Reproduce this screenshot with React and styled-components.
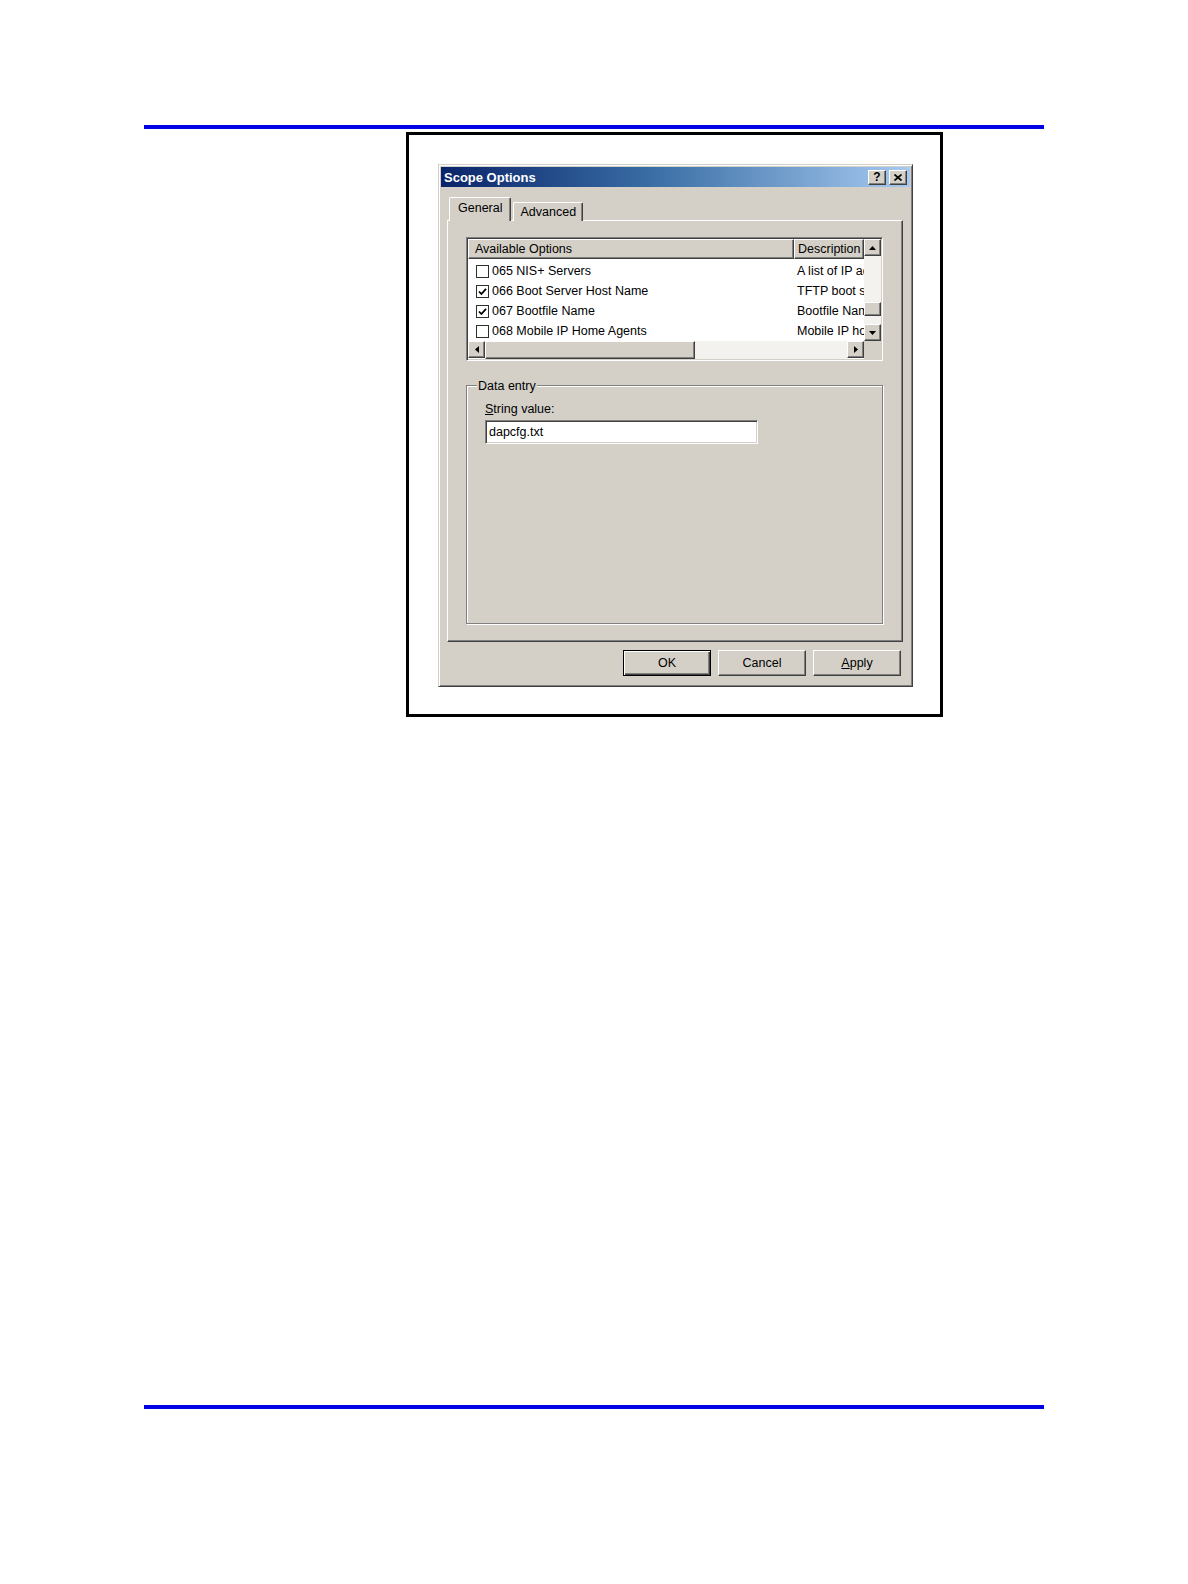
import React from 'react';
import styled, { createGlobalStyle } from 'styled-components';

const FACE = '#d4d0c8';
const SHADOW = '#808080';
const DARK = '#404040';
const UI_FONT = '"Liberation Sans", Arial, sans-serif';

const GlobalStyle = createGlobalStyle`
  html, body {
    margin: 0;
    padding: 0;
    background: #fff;
  }
  body {
    font-family: ${UI_FONT};
  }
`;

const Page = styled.div`
  width: 1188px;
  min-height: 1584px;
  box-sizing: border-box;
  padding: 125px 0 0 144px;
  background: #fff;
`;

const Rule = styled.div`
  width: 900px;
  height: 4px;
  background: #0000e4;
`;

const BottomRule = styled(Rule)`
  margin-top: 688px;
`;

const Figure = styled.div`
  width: 537px;
  margin: 3px 0 0 262px;
  box-sizing: border-box;
  border: 3px solid #000;
  padding: 29px 27px 27px 29px;
`;

const raised = `
  background: ${FACE};
  border: 1px solid;
  border-color: #fff ${DARK} ${DARK} #fff;
  box-shadow: inset -1px -1px ${SHADOW};
  box-sizing: border-box;
`;

const Dialog = styled.div`
  width: 475px;
  box-sizing: border-box;
  background: ${FACE};
  border: 1px solid;
  border-color: ${FACE} ${DARK} ${DARK} ${FACE};
  box-shadow: inset 1px 1px #fff, inset -1px -1px ${SHADOW};
  padding: 2px;
  font-family: ${UI_FONT};
  font-size: 12.5px;
  color: #000;
`;

const TitleBar = styled.div`
  display: flex;
  align-items: center;
  height: 20px;
  padding-left: 3px;
  background: linear-gradient(to right, #0a246a 0%, #3a6ea5 45%, #a6caf0 100%);
  color: #fff;
  font-weight: bold;
  font-size: 13px;
`;

const TitleText = styled.div`
  flex: 1;
`;

const CaptionButtons = styled.div`
  display: flex;
  gap: 3px;
  margin-right: 3px;
`;

const CaptionButton = styled.div`
  ${raised}
  width: 18px;
  height: 15px;
  display: flex;
  align-items: center;
  justify-content: center;
  color: #000;
  font-size: 12px;
  font-weight: bold;
  line-height: 1;
`;

const Body = styled.div`
  padding: 10px 7px 8px 6px;
`;

const TabStrip = styled.div`
  display: flex;
  align-items: flex-end;
  gap: 2px;
  height: 24px;
  padding-left: 2px;
  margin-bottom: -1px;
  position: relative;
  z-index: 1;
`;

const Tab = styled.div`
  height: ${(p) => (p.$active ? 24 : 19)}px;
  box-sizing: border-box;
  padding: 0 ${(p) => (p.$active ? 8 : 6)}px ${(p) => (p.$active ? 3 : 0)}px;
  display: flex;
  align-items: center;
  background: ${FACE};
  border-top: 1px solid #fff;
  border-left: 1px solid #fff;
  border-right: 1px solid ${DARK};
  box-shadow: inset -1px 0 ${SHADOW};
  border-radius: 2px 2px 0 0;
`;

const Panel = styled.div`
  ${raised}
  height: 422px;
  padding: 16px 19px 17px 18px;
  display: flex;
  flex-direction: column;
`;

const ListBox = styled.div`
  height: 124px;
  box-sizing: border-box;
  border: 1px solid;
  border-color: ${SHADOW} #fff #fff ${SHADOW};
  box-shadow: inset 1px 1px ${DARK}, inset -1px -1px ${FACE};
  padding: 1px;
  background: #fff;
  display: flex;
  flex-direction: column;
`;

const ListMain = styled.div`
  display: flex;
  height: 102px;
`;

const ListContent = styled.div`
  flex: 1;
  min-width: 0;
  overflow: hidden;
  display: flex;
  flex-direction: column;
`;

const HeaderRow = styled.div`
  display: flex;
  height: 20px;
  flex-shrink: 0;
`;

const HeaderCell = styled.div`
  ${raised}
  ${(p) => (p.$width ? `width: ${p.$width}px; flex-shrink: 0;` : 'flex: 1; min-width: 0;')}
  height: 20px;
  padding-left: ${(p) => p.$pad}px;
  display: flex;
  align-items: center;
  white-space: nowrap;
  overflow: hidden;
`;

const Rows = styled.div`
  padding-top: 2px;
`;

const Row = styled.div`
  display: flex;
  align-items: center;
  height: 20px;
`;

const OptionCell = styled.div`
  width: 326px;
  flex-shrink: 0;
  display: flex;
  align-items: center;
  gap: 3px;
  padding-left: 8px;
  box-sizing: border-box;
  white-space: nowrap;
`;

const DescCell = styled.div`
  flex: 1;
  min-width: 0;
  padding-left: 3px;
  white-space: nowrap;
  overflow: hidden;
  text-overflow: clip;
`;

const CheckBox = styled.div`
  width: 13px;
  height: 13px;
  box-sizing: border-box;
  border: 1px solid #2e2e2e;
  background: #fff;
  display: flex;
  align-items: center;
  justify-content: center;
`;

const VScroll = styled.div`
  width: 17px;
  flex-shrink: 0;
  display: flex;
  flex-direction: column;
`;

const ScrollButton = styled.div`
  ${raised}
  width: 17px;
  height: 17px;
  flex-shrink: 0;
  display: flex;
  align-items: center;
  justify-content: center;
`;

const Track = styled.div`
  flex: ${(p) => (p.$size ? `0 0 ${p.$size}px` : 1)};
  background: #f3f2ef;
`;

const Thumb = styled.div`
  ${raised}
  flex: 0 0 ${(p) => p.$size}px;
`;

const HScrollRow = styled.div`
  display: flex;
  height: 18px;
`;

const HScroll = styled.div`
  flex: 1;
  display: flex;
`;

const Corner = styled.div`
  width: 17px;
  background: ${FACE};
`;

const GroupBox = styled.div`
  flex: 1;
  margin-top: 24px;
  border: 1px solid ${SHADOW};
  box-shadow: 1px 1px 0 #fff, inset 1px 1px 0 #fff;
  padding: 0 18px;
  display: flex;
  flex-direction: column;
  align-items: flex-start;
`;

const GroupLabel = styled.div`
  margin: -7px 0 0 -8px;
  padding: 0 1px;
  background: ${FACE};
  line-height: 15px;
`;

const FieldLabel = styled.label`
  margin-top: 8px;
  line-height: 15px;
`;

const TextInput = styled.input`
  margin-top: 3px;
  width: 273px;
  height: 24px;
  box-sizing: border-box;
  border: 1px solid;
  border-color: ${SHADOW} #fff #fff ${SHADOW};
  box-shadow: inset 1px 1px ${DARK}, inset -1px -1px ${FACE};
  background: #fff;
  padding: 0 0 0 3px;
  font-family: ${UI_FONT};
  font-size: 12.5px;
  color: #000;
  outline: none;
`;

const ButtonRow = styled.div`
  display: flex;
  justify-content: flex-end;
  gap: 7px;
  margin-top: 8px;
  padding-right: 2px;
`;

const Button = styled.button`
  width: 88px;
  height: 26px;
  box-sizing: border-box;
  background: ${FACE};
  font-family: ${UI_FONT};
  font-size: 12.5px;
  color: #000;
  padding: 0;
  border: 1px solid;
  border-color: ${(p) => (p.$default ? '#000' : `#fff ${DARK} ${DARK} #fff`)};
  box-shadow: ${(p) =>
    p.$default
      ? `inset 1px 1px #fff, inset -1px -1px ${DARK}, inset -2px -2px ${SHADOW}`
      : `inset -1px -1px ${SHADOW}`};
`;

const Arrow = ({ dir }) => {
  const pts = {
    up: '0,4 3.5,0 7,4',
    down: '0,0 7,0 3.5,4',
    left: '4,0 4,7 0,3.5',
    right: '0,0 0,7 4,3.5',
  }[dir];
  const vertical = dir === 'up' || dir === 'down';
  return (
    <svg width={vertical ? 7 : 4} height={vertical ? 4 : 7} viewBox={vertical ? '0 0 7 4' : '0 0 4 7'}>
      <polygon points={pts} fill="#000" />
    </svg>
  );
};

const Check = () => (
  <svg width="9" height="9" viewBox="0 0 9 9">
    <path d="M1 4.5 L3.4 7 L8 1.8" fill="none" stroke="#000" strokeWidth="1.8" />
  </svg>
);

const CloseGlyph = () => (
  <svg width="8" height="7" viewBox="0 0 8 7">
    <path d="M0.5 0.5 L7.5 6.5 M7.5 0.5 L0.5 6.5" stroke="#000" strokeWidth="1.7" />
  </svg>
);

// descriptions are longer than the column, the list view clips them
const options = [
  { code: '065 NIS+ Servers', desc: 'A list of IP addresses indicating NIS+ servers', checked: false },
  { code: '066 Boot Server Host Name', desc: 'TFTP boot server host name', checked: true },
  { code: '067 Bootfile Name', desc: 'Bootfile Name', checked: true },
  { code: '068 Mobile IP Home Agents', desc: 'Mobile IP home agents in priority order', checked: false },
];

const App = () => (
  <>
    <GlobalStyle />
    <Page>
      <Rule />
      <Figure>
        <Dialog>
          <TitleBar>
            <TitleText>Scope Options</TitleText>
            <CaptionButtons>
              <CaptionButton>?</CaptionButton>
              <CaptionButton>
                <CloseGlyph />
              </CaptionButton>
            </CaptionButtons>
          </TitleBar>
          <Body>
            <TabStrip>
              <Tab $active>General</Tab>
              <Tab>Advanced</Tab>
            </TabStrip>
            <Panel>
              <ListBox>
                <ListMain>
                  <ListContent>
                    <HeaderRow>
                      <HeaderCell $width={326} $pad={6}>Available Options</HeaderCell>
                      <HeaderCell $pad={3}>Description</HeaderCell>
                    </HeaderRow>
                    <Rows>
                      {options.map((o) => (
                        <Row key={o.code}>
                          <OptionCell>
                            <CheckBox>{o.checked && <Check />}</CheckBox>
                            {o.code}
                          </OptionCell>
                          <DescCell>{o.desc}</DescCell>
                        </Row>
                      ))}
                    </Rows>
                  </ListContent>
                  <VScroll>
                    <ScrollButton>
                      <Arrow dir="up" />
                    </ScrollButton>
                    <Track />
                    <Thumb $size={14} />
                    <Track $size={8} />
                    <ScrollButton>
                      <Arrow dir="down" />
                    </ScrollButton>
                  </VScroll>
                </ListMain>
                <HScrollRow>
                  <HScroll>
                    <ScrollButton>
                      <Arrow dir="left" />
                    </ScrollButton>
                    <Thumb $size={210} />
                    <Track />
                    <ScrollButton>
                      <Arrow dir="right" />
                    </ScrollButton>
                  </HScroll>
                  <Corner />
                </HScrollRow>
              </ListBox>
              <GroupBox>
                <GroupLabel>Data entry</GroupLabel>
                <FieldLabel htmlFor="string-value">
                  <u>S</u>tring value:
                </FieldLabel>
                <TextInput id="string-value" readOnly defaultValue="dapcfg.txt" />
              </GroupBox>
            </Panel>
            <ButtonRow>
              <Button $default>OK</Button>
              <Button>Cancel</Button>
              <Button>
                <u>A</u>pply
              </Button>
            </ButtonRow>
          </Body>
        </Dialog>
      </Figure>
      <BottomRule />
    </Page>
  </>
);

export default App;
